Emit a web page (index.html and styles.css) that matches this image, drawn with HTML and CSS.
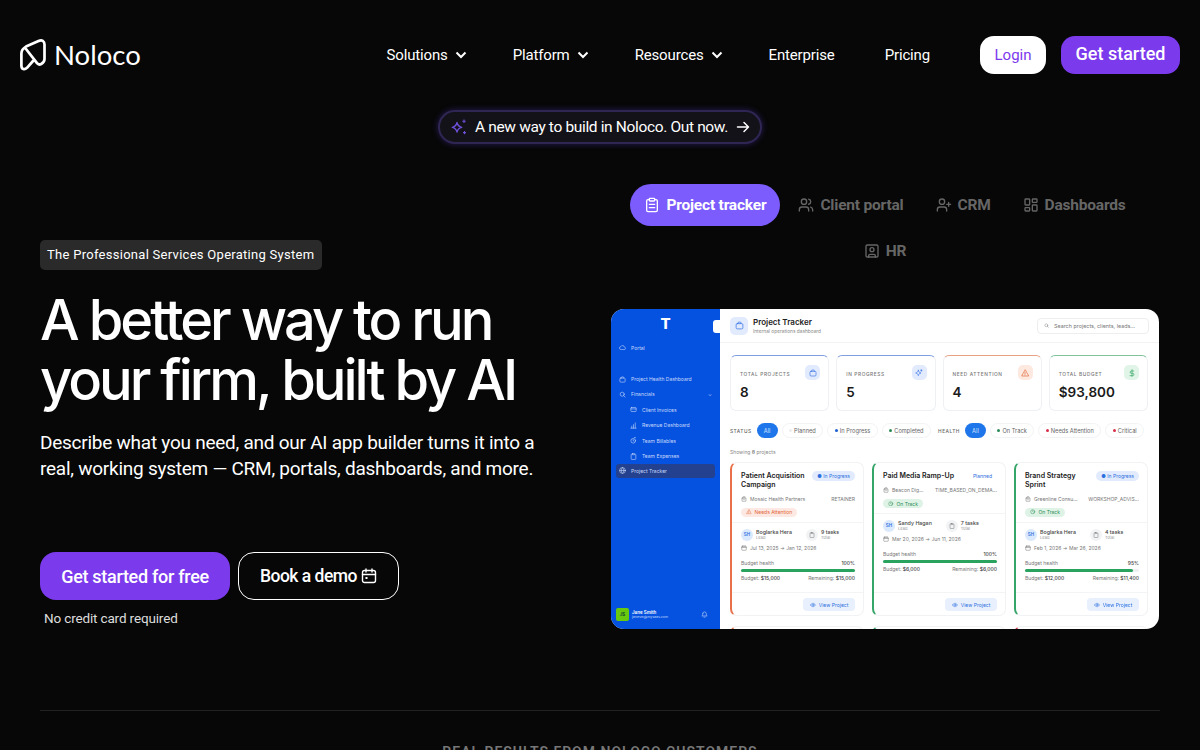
FILE: index.html
```html
<!DOCTYPE html>
<html lang="en">
<head>
  <meta charset="UTF-8">
  <title>Noloco - The Professional Services Operating System</title>
  <link rel="stylesheet" href="styles.css">
</head>
<body>

  <!-- small icons used inside the dashboard picture -->
  <svg class="sprite">
    <symbol id="i-brief" viewBox="0 0 24 24"><rect x="3" y="7" width="18" height="14" rx="3"/><path d="M8 7V5a2 2 0 0 1 2-2h4a2 2 0 0 1 2 2v2"/></symbol>
    <symbol id="i-spark" viewBox="0 0 24 24"><path d="M10 4c1 5 3 7 8 8-5 1-7 3-8 8-1-5-3-7-8-8 5-1 7-3 8-8zM19 2v5M17 4h4"/></symbol>
    <symbol id="i-alert" viewBox="0 0 24 24"><path d="M12 3 2 21h20zM12 10v5M12 18h.01"/></symbol>
    <symbol id="i-dollar" viewBox="0 0 24 24"><path d="M12 2v20M17 6H10a3.500 3.500 0 0 0 0 7h4a3.500 3.500 0 0 1 0 7H6"/></symbol>
    <symbol id="i-build" viewBox="0 0 24 24"><rect x="4" y="8" width="16" height="13" rx="1"/><path d="M8 8V3h8v5M9 13h1M14 13h1"/></symbol>
    <symbol id="i-cal" viewBox="0 0 24 24"><rect x="3" y="5" width="18" height="16" rx="2"/><path d="M3 10h18M8 2v5M16 2v5"/></symbol>
    <symbol id="i-clip" viewBox="0 0 24 24"><rect x="8" y="2" width="8" height="4" rx="1"/><path d="M16 4h2a2 2 0 0 1 2 2v14a2 2 0 0 1-2 2H6a2 2 0 0 1-2-2V6a2 2 0 0 1 2-2h2"/></symbol>
    <symbol id="i-eye" viewBox="0 0 24 24"><path d="M2 12s4-7 10-7 10 7 10 7-4 7-10 7-10-7-10-7z"/><circle cx="12" cy="12" r="3"/></symbol>
    <symbol id="i-check" viewBox="0 0 24 24"><circle cx="12" cy="12" r="9"/><path d="M12 7v5l3 2"/></symbol>
    <symbol id="i-bell" viewBox="0 0 24 24"><path d="M6 9a6 6 0 0 1 12 0c0 7 3 8 3 8H3s3-1 3-8M10 21h4"/></symbol>
    <symbol id="i-cloud" viewBox="0 0 24 24"><path d="M7 19a5 5 0 0 1-1-10 7 7 0 0 1 13 2 4 4 0 0 1-1 8z"/></symbol>
    <symbol id="i-search" viewBox="0 0 24 24"><circle cx="11" cy="11" r="7"/><path d="m21 21-5-5"/></symbol>
    <symbol id="i-mail" viewBox="0 0 24 24"><rect x="3" y="5" width="18" height="14" rx="2"/><path d="M3 10h18"/></symbol>
    <symbol id="i-bars" viewBox="0 0 24 24"><path d="M3 21h18M6 21v-7M12 21V9M18 21V3"/></symbol>
    <symbol id="i-clock" viewBox="0 0 24 24"><circle cx="11" cy="13" r="8"/><path d="M11 9v4l3 2M15 2h4"/></symbol>
    <symbol id="i-globe" viewBox="0 0 24 24"><circle cx="12" cy="12" r="10"/><path d="M2 12h20M12 2c6 6 6 14 0 20-6-6-6-14 0-20z"/></symbol>
  </svg>

  <!-- Top nav -->
  <header class="topbar">
    <a class="logo" href="#">
      <svg class="logo-mark" viewBox="0 0 26 32" fill="none" stroke="#fff" stroke-width="2.700" stroke-linejoin="round" stroke-linecap="round"><path d="M13 22 7 28.800C4.500 31.300 1.400 30.300 1.400 26.800V14.500C1.400 11 3 9.300 6 7.600L18.500 2C22 .5 24.500 2 24.500 5.500V20c0 2.500-1 3.800-3.300 5-1.700.9-3.200.4-4.200-.8L6 10"/></svg>
      <span>Noloco</span>
    </a>
    <nav class="nav-links">
      <a href="#">Solutions <svg class="chev" viewBox="0 0 12 12"><path d="M1.500 3.500 6 8l4.500-4.500"/></svg></a>
      <a href="#">Platform <svg class="chev" viewBox="0 0 12 12"><path d="M1.500 3.500 6 8l4.500-4.500"/></svg></a>
      <a href="#">Resources <svg class="chev" viewBox="0 0 12 12"><path d="M1.500 3.500 6 8l4.500-4.500"/></svg></a>
      <a href="#">Enterprise</a>
      <a href="#">Pricing</a>
    </nav>
    <div class="nav-actions">
      <a class="btn-login" href="#">Login</a>
      <a class="btn-start" href="#">Get started</a>
    </div>
  </header>

  <div class="announce-row">
    <a class="announce" href="#">
      <svg class="sparkle" viewBox="0 0 18 18" fill="none" stroke="#6d4fd8" stroke-width="1.300" stroke-linejoin="round"><path d="M7 4.500c.6 3 1.700 4.200 4.800 4.800-3.100.6-4.200 1.800-4.800 4.800-.6-3-1.700-4.200-4.800-4.800C5.300 8.700 6.400 7.500 7 4.500z"/><path d="M14 1.500v3.500M12.300 3.200h3.400M14.500 13v3.200M13 14.600h3" stroke-width="1.100"/></svg>
      A new way to build in Noloco. Out now.
      <svg class="arrow" viewBox="0 0 14 14" fill="none" stroke="#fff" stroke-width="1.500" stroke-linecap="round" stroke-linejoin="round"><path d="M1.500 7h11M8 2.500 12.500 7 8 11.500"/></svg>
    </a>
  </div>

  <main class="hero">
    <section class="hero-left">
      <div class="eyebrow">The Professional Services Operating System</div>
      <h1>A better way to run<br>your firm, built by AI</h1>
      <p class="lead">Describe what you need, and our AI app builder turns it into a real, working system — CRM, portals, dashboards, and more.</p>
      <div class="cta-row">
        <a class="cta-primary" href="#">Get started for free</a>
        <a class="cta-outline" href="#">Book a demo
          <svg viewBox="0 0 16 16" fill="none" stroke="#fff" stroke-width="1.400" stroke-linecap="round"><rect x="1.500" y="2.500" width="13" height="12" rx="2"/><path d="M1.500 6.500h13M5 1v3M11 1v3"/><rect x="4.500" y="9" width="2" height="2" fill="#fff" stroke="none"/></svg>
        </a>
      </div>
      <div class="no-card">No credit card required</div>
    </section>

    <section class="hero-right">
      <div class="tabs">
        <a class="tab active" href="#">
          <svg viewBox="0 0 24 24"><rect x="8" y="2" width="8" height="4" rx="1"/><path d="M16 4h2a2 2 0 0 1 2 2v14a2 2 0 0 1-2 2H6a2 2 0 0 1-2-2V6a2 2 0 0 1 2-2h2M8 11h8M8 16h8"/></svg>
          Project tracker</a>
        <a class="tab" href="#">
          <svg viewBox="0 0 24 24"><path d="M16 21v-2a4 4 0 0 0-4-4H6a4 4 0 0 0-4 4v2"/><circle cx="9" cy="7" r="4"/><path d="M22 21v-2a4 4 0 0 0-3-3.900M16 3.100a4 4 0 0 1 0 7.800"/></svg>
          Client portal</a>
        <a class="tab" href="#">
          <svg viewBox="0 0 24 24"><path d="M16 21v-2a4 4 0 0 0-4-4H6a4 4 0 0 0-4 4v2"/><circle cx="9" cy="7" r="4"/><path d="M19 8v6M22 11h-6"/></svg>
          CRM</a>
        <a class="tab" href="#">
          <svg viewBox="0 0 24 24"><rect x="3" y="3" width="7" height="9" rx="1"/><rect x="14" y="3" width="7" height="5" rx="1"/><rect x="14" y="12" width="7" height="9" rx="1"/><rect x="3" y="16" width="7" height="5" rx="1"/></svg>
          Dashboards</a>
        <a class="tab" href="#">
          <svg viewBox="0 0 24 24"><rect x="3" y="3" width="18" height="18" rx="2"/><circle cx="12" cy="10" r="3"/><path d="M7 21v-2a2 2 0 0 1 2-2h6a2 2 0 0 1 2 2v2"/></svg>
          HR</a>
      </div>

      <div class="app">
        <aside class="side">
          <div class="side-logo">T</div>
          <span class="side-toggle"></span>
          <div class="side-item portal"><svg><use href="#i-cloud"/></svg>Portal</div>
          <div class="side-item"><svg><use href="#i-brief"/></svg>Project Health Dashboard</div>
          <div class="side-item fin"><svg><use href="#i-search"/></svg>Financials<b>⌄</b></div>
          <div class="side-item sub"><svg><use href="#i-mail"/></svg>Client Invoices</div>
          <div class="side-item sub"><svg><use href="#i-bars"/></svg>Revenue Dashboard</div>
          <div class="side-item sub"><svg><use href="#i-clock"/></svg>Team Billables</div>
          <div class="side-item sub"><svg><use href="#i-clip"/></svg>Team Expenses</div>
          <div class="side-item current"><svg><use href="#i-globe"/></svg>Project Tracker</div>
          <div class="side-user">
            <span class="user-pic">JS</span>
            <div class="user-text"><strong>Jane Smith</strong><small>janesm@mysaas.com</small></div>
            <svg class="bell"><use href="#i-bell"/></svg>
          </div>
        </aside>

        <div class="app-main">
          <div class="app-head">
            <span class="head-icon"><svg><use href="#i-brief"/></svg></span>
            <div>
              <div class="app-title">Project Tracker</div>
              <div class="app-sub">Internal operations dashboard</div>
            </div>
            <div class="search"><svg><use href="#i-search"/></svg>Search projects, clients, leads...</div>
          </div>

          <div class="app-body">
            <div class="stats">
              <div class="stat blue">
                <div class="stat-label">TOTAL PROJECTS</div><div class="stat-num">8</div><span class="stat-icon"><svg><use href="#i-brief"/></svg></span>
              </div>
              <div class="stat blue">
                <div class="stat-label">IN PROGRESS</div><div class="stat-num">5</div><span class="stat-icon"><svg><use href="#i-spark"/></svg></span>
              </div>
              <div class="stat orange">
                <div class="stat-label">NEED ATTENTION</div><div class="stat-num">4</div><span class="stat-icon"><svg><use href="#i-alert"/></svg></span>
              </div>
              <div class="stat green">
                <div class="stat-label">TOTAL BUDGET</div><div class="stat-num">$93,800</div><span class="stat-icon"><svg><use href="#i-dollar"/></svg></span>
              </div>
            </div>

            <div class="filters">
              <span class="f-label">STATUS</span>
              <span class="f-all">All</span>
              <span class="chip"><i class="c-none"></i>Planned</span>
              <span class="chip"><i class="c-blue"></i>In Progress</span>
              <span class="chip"><i class="c-green"></i>Completed</span>
              <span class="f-label health-label">HEALTH</span>
              <span class="f-all">All</span>
              <span class="chip"><i class="c-green"></i>On Track</span>
              <span class="chip"><i class="c-red"></i>Needs Attention</span>
              <span class="chip"><i class="c-red"></i>Critical</span>
            </div>

            <div class="showing">Showing <b>8</b> projects</div>

            <div class="cards">
              <article class="card orange">
                <div class="card-top">
                  <div class="card-title">Patient Acquisition Campaign</div>
                  <span class="status">● In Progress</span>
                </div>
                <div class="card-meta"><svg><use href="#i-build"/></svg><span>Mosaic Health Partners</span><span class="meta-type">RETAINER</span></div>
                <span class="health bad"><svg><use href="#i-alert"/></svg>Needs Attention</span>
                <div class="people">
                  <span class="av">SH</span>
                  <div class="who"><strong>Boglarka Hera</strong><small>Lead</small></div>
                  <span class="task-ic"><svg><use href="#i-clip"/></svg></span>
                  <div class="who"><strong>9 tasks</strong><small>Total</small></div>
                </div>
                <div class="dates"><svg><use href="#i-cal"/></svg>Jul 13, 2025 → Jan 12, 2026</div>
                <div class="row-between"><span>Budget health</span><b>100%</b></div>
                <div class="bar"><span style="width: 100%"></span></div>
                <div class="row-between"><span>Budget: <b>$15,000</b></span><span>Remaining: <b>$15,000</b></span></div>
                <div class="card-foot"><span class="view"><svg><use href="#i-eye"/></svg>View Project</span></div>
              </article>

              <article class="card green">
                <div class="card-top">
                  <div class="card-title">Paid Media Ramp-Up</div>
                  <span class="status plain">Planned</span>
                </div>
                <div class="card-meta"><svg><use href="#i-build"/></svg><span>Beacon Dig...</span><span class="meta-type">TIME_BASED_ON_DEMA...</span></div>
                <span class="health good"><svg><use href="#i-check"/></svg>On Track</span>
                <div class="people">
                  <span class="av">SH</span>
                  <div class="who"><strong>Sandy Hagan</strong><small>Lead</small></div>
                  <span class="task-ic"><svg><use href="#i-clip"/></svg></span>
                  <div class="who"><strong>7 tasks</strong><small>Total</small></div>
                </div>
                <div class="dates"><svg><use href="#i-cal"/></svg>Mar 20, 2026 → Jun 11, 2026</div>
                <div class="row-between"><span>Budget health</span><b>100%</b></div>
                <div class="bar"><span style="width: 100%"></span></div>
                <div class="row-between"><span>Budget: <b>$6,000</b></span><span>Remaining: <b>$6,000</b></span></div>
                <div class="card-foot"><span class="view"><svg><use href="#i-eye"/></svg>View Project</span></div>
              </article>

              <article class="card green">
                <div class="card-top">
                  <div class="card-title">Brand Strategy Sprint</div>
                  <span class="status">● In Progress</span>
                </div>
                <div class="card-meta"><svg><use href="#i-build"/></svg><span>Greenline Consu...</span><span class="meta-type">WORKSHOP_ADVIS...</span></div>
                <span class="health good"><svg><use href="#i-check"/></svg>On Track</span>
                <div class="people">
                  <span class="av">SH</span>
                  <div class="who"><strong>Boglarka Hera</strong><small>Lead</small></div>
                  <span class="task-ic"><svg><use href="#i-clip"/></svg></span>
                  <div class="who"><strong>4 tasks</strong><small>Total</small></div>
                </div>
                <div class="dates"><svg><use href="#i-cal"/></svg>Feb 1, 2026 → Mar 26, 2026</div>
                <div class="row-between"><span>Budget health</span><b>95%</b></div>
                <div class="bar"><span style="width: 95%"></span></div>
                <div class="row-between"><span>Budget: <b>$12,000</b></span><span>Remaining: <b>$11,400</b></span></div>
                <div class="card-foot"><span class="view"><svg><use href="#i-eye"/></svg>View Project</span></div>
              </article>

              <article class="card orange"></article>
              <article class="card green"></article>
              <article class="card red"></article>
            </div>
          </div>
        </div>
      </div>
    </section>
  </main>

  <div class="results">
    <div class="results-title">REAL RESULTS FROM NOLOCO CUSTOMERS</div>
  </div>

</body>
</html>
```

FILE: styles.css
```css
* {
  box-sizing: border-box;
}

html, body {
  height: 750px;
  overflow: hidden;
}

body {
  margin: 0;
  background: #070707;
  color: #fff;
  font-family: Roboto, sans-serif;
}

a {
  color: inherit;
  text-decoration: none;
}

.sprite {
  display: none;
}

/* top nav */
.topbar {
  display: flex;
  align-items: center;
  height: 38px;
  margin-top: 36px;
  padding: 0 20px;
}

.logo {
  display: flex;
  align-items: center;
  gap: 8px;
  font-family: Lato, sans-serif;
  font-size: 27.500px;
  line-height: 38px;
}

.logo-mark {
  width: 26px;
  height: 32px;
}

.nav-links {
  display: flex;
  align-items: center;
  gap: 50px;
  margin-left: auto;
  font-size: 15px;
  letter-spacing: -0.15px;
}

.nav-links a {
  display: flex;
  align-items: center;
  gap: 7px;
}

.chev {
  width: 12px;
  height: 12px;
  margin-right: -4px;
  fill: none;
  stroke: #fff;
  stroke-width: 2;
}

.nav-actions {
  display: flex;
  gap: 15px;
  margin-left: 50px;
}

.btn-login {
  width: 66px;
  height: 38px;
  border-radius: 14px;
  background: #fff;
  color: #7c3aed;
  font-size: 15px;
  line-height: 38px;
  text-align: center;
}

.btn-start {
  width: 119px;
  height: 38px;
  border-radius: 14px;
  background: #7c3aed;
  font-size: 18px;
  font-weight: 500;
  line-height: 36px;
  text-align: center;
}

/* announcement */
.announce-row {
  display: flex;
  justify-content: center;
  margin-top: 36px;
}

.announce {
  display: flex;
  align-items: center;
  width: 324px;
  height: 34px;
  padding: 0 10px;
  border: 2px solid #2f2654;
  border-radius: 17px;
  background: #131218;
  box-shadow: 0 0 6px rgba(90, 60, 200, 0.4);
  font-size: 15.500px;
  letter-spacing: -0.35px;
  white-space: nowrap;
}

.sparkle {
  flex: none;
  width: 18px;
  height: 18px;
  margin-right: 7px;
}

.arrow {
  flex: none;
  width: 14px;
  height: 14px;
  margin-left: auto;
}

/* hero */
.hero {
  display: grid;
  grid-template-columns: 560px 548px;
  justify-content: space-between;
  padding: 0 41px 0 40px;
  margin-top: 40px;
}

.hero-left {
  padding-top: 56px;
}

.eyebrow {
  display: inline-block;
  height: 30px;
  padding: 0 8px 0 7px;
  border-radius: 5px;
  background: #2a2a2a;
  font-size: 13px;
  line-height: 30px;
  letter-spacing: 0.28px;
  white-space: nowrap;
}

h1 {
  margin: 20px 0 0;
  font-family: Inter, sans-serif;
  font-size: 56px;
  font-weight: 500;
  line-height: 60px;
  letter-spacing: -3px;
}

.lead {
  width: 510px;
  margin: 20px 0 0;
  font-size: 19px;
  line-height: 26px;
  letter-spacing: -0.25px;
}

.cta-row {
  display: flex;
  gap: 8px;
  margin-top: 70px;
}

.cta-primary,
.cta-outline {
  display: flex;
  align-items: center;
  justify-content: center;
  height: 48px;
  border-radius: 16px;
  font-weight: 500;
}

.cta-primary {
  width: 190px;
  background: #7c3aed;
  font-size: 18px;
  letter-spacing: -0.3px;
}

.cta-outline {
  gap: 4px;
  width: 161px;
  border: 1px solid #fff;
  font-size: 17.500px;
  letter-spacing: -0.5px;
}

.cta-outline svg {
  width: 16px;
  height: 16px;
}

.no-card {
  margin: 10px 0 0 4px;
  color: #ddd;
  font-size: 13.500px;
  letter-spacing: -0.15px;
}

/* tabs */
.tabs {
  display: flex;
  flex-wrap: wrap;
  justify-content: center;
  gap: 4px;
}

.tab {
  display: flex;
  align-items: center;
  gap: 6px;
  height: 42px;
  padding: 0 14px;
  border-radius: 21px;
  color: #666;
  font-size: 15.500px;
  font-weight: 700;
  letter-spacing: -0.2px;
}

.tab svg {
  flex: none;
  width: 16px;
  height: 16px;
  fill: none;
  stroke: currentColor;
  stroke-width: 2;
  stroke-linecap: round;
  stroke-linejoin: round;
}

.tab.active {
  background: #7c5cfc;
  color: #fff;
}

/* dashboard picture */
.app {
  display: flex;
  position: relative;
  height: 320px;
  margin-top: 37px;
  overflow: hidden;
  border-radius: 13px;
  background: #fff;
  color: #222;
  font-family: Inter, sans-serif;
  filter: blur(0.25px);
}

.app svg {
  fill: none;
  stroke: currentColor;
  stroke-width: 2;
  stroke-linecap: round;
  stroke-linejoin: round;
}

.side {
  display: flex;
  flex-direction: column;
  flex: none;
  position: relative;
  width: 109px;
  padding: 6px 5px 0;
  background: #0552e0;
  color: #c9d9fa;
  font-size: 5px;
}

.side-logo {
  color: #fff;
  font-size: 15px;
  font-weight: 800;
  line-height: 18px;
  text-align: center;
}

.side-toggle {
  position: absolute;
  top: 11px;
  right: 0;
  width: 7px;
  height: 13px;
  border-radius: 3px 0 0 3px;
  background: #fff;
}

.side-item {
  display: flex;
  align-items: center;
  gap: 5px;
  height: 15.400px;
  padding-left: 3px;
  white-space: nowrap;
}

.side-item svg {
  flex: none;
  width: 7px;
  height: 7px;
}

.side-item b {
  margin-left: auto;
  margin-right: 3px;
  font-weight: 400;
}

.portal {
  margin-top: 7px;
  margin-bottom: 16px;
}

.sub {
  padding-left: 14px;
}

.current {
  height: 14px;
  border-radius: 3px;
  background: #23418f;
}

.side-user {
  display: flex;
  align-items: center;
  gap: 3px;
  margin-top: auto;
  margin-bottom: 8px;
}

.user-pic {
  width: 13px;
  height: 13px;
  border-radius: 2px;
  background: #69c90f;
  color: #143;
  font-size: 4.500px;
  font-weight: 700;
  line-height: 13px;
  text-align: center;
}

.user-text {
  display: flex;
  flex-direction: column;
}

.user-text strong {
  color: #fff;
  font-size: 4.500px;
  font-weight: 600;
}

.user-text small {
  font-size: 3.500px;
}

.bell {
  width: 7px;
  height: 7px;
  margin: 0 7px 0 auto;
}

.app-main {
  flex: 1;
  min-width: 0;
}

.app-head {
  display: flex;
  align-items: center;
  gap: 5px;
  height: 34px;
  padding: 0 10px;
  border-bottom: 1px solid #f1f2f4;
}

.head-icon {
  display: flex;
  align-items: center;
  justify-content: center;
  width: 18px;
  height: 18px;
  border-radius: 5px;
  background: #e2ebfd;
  color: #3b76e8;
}

.head-icon svg {
  width: 9px;
  height: 9px;
}

.app-title {
  color: #222;
  font-size: 8px;
  font-weight: 600;
  line-height: 10px;
}

.app-sub {
  color: #888;
  font-size: 4.800px;
  line-height: 8px;
}

.search {
  display: flex;
  align-items: center;
  gap: 5px;
  width: 112px;
  height: 16px;
  margin-left: auto;
  padding-left: 6px;
  border: 1px solid #eee;
  border-radius: 4px;
  color: #777;
  font-size: 5.400px;
  white-space: nowrap;
}

.search svg {
  flex: none;
  width: 5px;
  height: 5px;
}

.app-body {
  padding: 12px 11px 0 10px;
}

.stats {
  display: grid;
  grid-template-columns: repeat(4, 1fr);
  gap: 7px;
}

.stat {
  position: relative;
  height: 56px;
  padding: 14px 9px 0;
  border: 1px solid #eef0f3;
  border-top: 1px solid #7f9fe0;
  border-radius: 6px;
}

.stat.orange {
  border-top-color: #e9a184;
}

.stat.green {
  border-top-color: #7fc29b;
}

.stat-label {
  color: #777;
  font-size: 4.800px;
  font-weight: 500;
  letter-spacing: 0.6px;
  line-height: 8px;
}

.stat-num {
  margin-top: 6px;
  color: #1a1a1a;
  font-size: 13.500px;
  font-weight: 600;
  line-height: 16px;
}

.stat-icon {
  display: flex;
  align-items: center;
  justify-content: center;
  position: absolute;
  top: 9px;
  right: 8px;
  width: 15px;
  height: 15px;
  border-radius: 5px;
  background: #e2ebfd;
  color: #3b76e8;
}

.stat-icon svg {
  width: 8px;
  height: 8px;
}

.stat.orange .stat-icon {
  background: #fde9e0;
  color: #e4683a;
}

.stat.green .stat-icon {
  background: #e0f4e8;
  color: #2fa35f;
}

.filters {
  display: flex;
  align-items: center;
  gap: 4px;
  height: 15px;
  margin-top: 12px;
  color: #666;
  font-size: 5.700px;
  white-space: nowrap;
}

.f-label {
  margin-right: 1px;
  font-size: 4.800px;
  font-weight: 500;
  letter-spacing: 0.5px;
}

.health-label {
  margin-left: 3px;
}

.f-all {
  width: 21px;
  height: 15px;
  border-radius: 8px;
  background: #1f76ea;
  color: #cfe2ff;
  line-height: 15px;
  text-align: center;
}

.chip {
  display: flex;
  align-items: center;
  gap: 2px;
  height: 15px;
  padding: 0 6.500px;
  border: 1px solid #f2f3f5;
  border-radius: 8px;
}

.chip i {
  width: 3px;
  height: 3px;
  border-radius: 50%;
}

.c-none { background: #eee; }
.c-blue { background: #1f5fd0; }
.c-green { background: #2c8a57; }
.c-red { background: #d6304a; }

.showing {
  margin-top: 10px;
  color: #888;
  font-size: 5px;
  line-height: 8px;
}

.cards {
  display: grid;
  grid-template-columns: repeat(3, 1fr);
  grid-auto-rows: 154px;
  gap: 10px 8px;
  margin-top: 6px;
}

.card {
  display: flex;
  flex-direction: column;
  align-items: stretch;
  min-width: 0;
  padding: 8px 8px 4px 9px;
  border: 1px solid #f1f2f4;
  border-left: 2px solid #e8714a;
  border-radius: 7px;
  color: #777;
  font-size: 5px;
}

.card.green { border-left-color: #35a568; }
.card.red { border-left-color: #d9404f; }

.card-top {
  display: flex;
  align-items: flex-start;
  justify-content: space-between;
}

.card-title {
  width: 70px;
  color: #222;
  font-size: 7px;
  font-weight: 600;
  line-height: 9.300px;
}

.card.green .card-title {
  width: 72px;
}

.status {
  flex: none;
  height: 10px;
  padding: 0 5px;
  border-radius: 5px;
  background: #e2ebfd;
  color: #2a6fe0;
  font-size: 5px;
  line-height: 10px;
}

.status.plain {
  background: none;
}

.card-meta {
  display: flex;
  align-items: center;
  gap: 3px;
  margin-top: 5px;
  line-height: 8px;
  white-space: nowrap;
}

.card-meta svg,
.dates svg {
  flex: none;
  width: 6px;
  height: 6px;
}

.meta-type {
  margin-left: auto;
}

.health {
  display: flex;
  align-items: center;
  gap: 3px;
  align-self: flex-start;
  height: 9px;
  margin-top: 5px;
  padding: 0 5px;
  border-radius: 5px;
  font-size: 5px;
}

.health svg {
  width: 5.500px;
  height: 5.500px;
}

.health.bad {
  background: #fde9e3;
  color: #e4683a;
}

.health.good {
  background: #def3e6;
  color: #2a8a55;
}

.people {
  display: flex;
  align-items: center;
  gap: 3px;
  margin: 5px -8px 0 -9px;
  padding: 6px 8px 0 9px;
  border-top: 1px solid #f3f4f6;
}

.av,
.task-ic {
  flex: none;
  width: 12px;
  height: 12px;
  border-radius: 50%;
}

.av {
  background: #dbe9fd;
  color: #2a6fe0;
  font-size: 4.500px;
  font-weight: 600;
  line-height: 12px;
  text-align: center;
}

.task-ic {
  display: flex;
  align-items: center;
  justify-content: center;
  margin-left: 11px;
  background: #f2f3f5;
}

.task-ic svg {
  width: 6px;
  height: 6px;
}

.who {
  display: flex;
  flex-direction: column;
  color: #999;
  font-size: 4px;
  line-height: 6px;
}

.who strong {
  color: #444;
  font-size: 5.300px;
  font-weight: 500;
  white-space: nowrap;
}

.who small {
  font-size: 4px;
}

.dates {
  display: flex;
  align-items: center;
  gap: 3px;
  margin: 3px 0 7px;
  line-height: 8px;
}

.row-between {
  display: flex;
  justify-content: space-between;
  line-height: 8px;
}

.row-between b {
  color: #444;
  font-weight: 500;
}

.bar {
  height: 3px;
  margin: 2px 0;
  border-radius: 2px;
  background: #eef0f3;
}

.bar span {
  display: block;
  height: 3px;
  border-radius: 2px;
  background: #2aa35f;
}

.card-foot {
  display: flex;
  justify-content: flex-end;
  margin: auto -8px 0 -9px;
  padding: 5px 8px 0;
  border-top: 1px solid #f3f4f6;
}

.view {
  display: flex;
  align-items: center;
  justify-content: center;
  gap: 3px;
  width: 52px;
  height: 13px;
  border-radius: 4px;
  background: #e8f0fd;
  color: #2a6fe0;
  font-size: 5px;
}

.view svg {
  width: 6px;
  height: 6px;
}

/* bottom strip */
.results {
  height: 60px;
  margin: 0 40px;
  margin-top: 81px;
  border-top: 1px solid #222;
}

.results-title {
  margin-top: 33px;
  color: #777;
  font-size: 14px;
  font-weight: 600;
  letter-spacing: 1px;
  text-align: center;
}
```
